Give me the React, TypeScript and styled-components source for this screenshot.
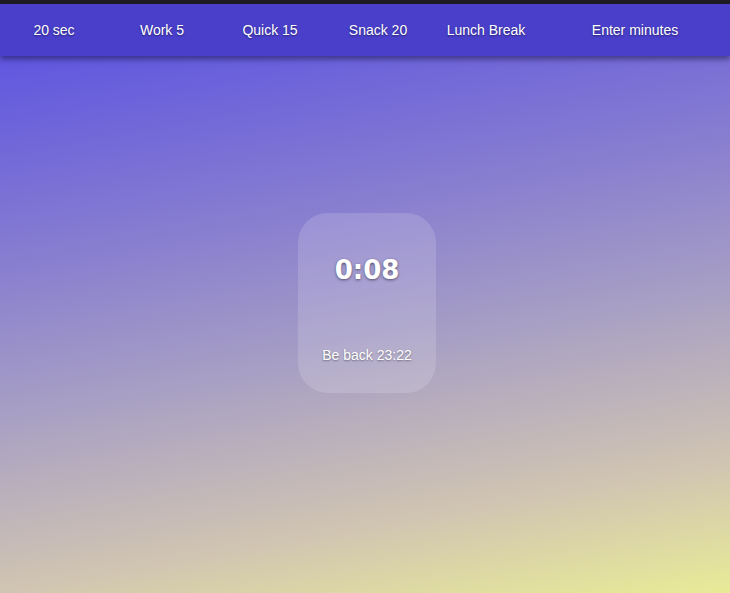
import React from "react";
import styled, { createGlobalStyle } from "styled-components";

const Global = createGlobalStyle`
  html, body { margin: 0; padding: 0; height: 100%; }
  body {
    font-family: "Liberation Sans", Arial, sans-serif;
    background: #1e1d24;
  }
  #root { height: 100%; }
`;

const Page = styled.div`
  min-height: 593px;
  box-sizing: border-box;
  padding-top: 4px;
  display: flex;
  flex-direction: column;
  background: #1e1d24;
`;

const Main = styled.div`
  flex: 1;
  display: flex;
  flex-direction: column;
  background: linear-gradient(
    170deg,
    #5f56e0 0%,
    #8a80cf 33%,
    #a79fc4 54%,
    #d0c4b2 80%,
    #e9eb97 100%
  );
`;

const NavBar = styled.nav`
  height: 52px;
  display: flex;
  align-items: stretch;
  background: #493fca;
  box-shadow: 0 3px 6px rgba(20, 15, 60, 0.55);
  position: relative;
  z-index: 1;
`;

const NavButton = styled.button`
  width: 108px;
  flex: none;
  border: 0;
  background: transparent;
  color: #fff;
  font-family: "Liberation Sans", Arial, sans-serif;
  font-size: 14px;
  text-shadow: 0 1px 2px rgba(0, 0, 0, 0.45);
  cursor: pointer;
  padding: 0;
`;

const MinutesInput = styled.input`
  flex: 1;
  min-width: 0;
  border: 0;
  background: transparent;
  color: #fff;
  text-align: center;
  font-family: "Liberation Sans", Arial, sans-serif;
  font-size: 14px;
  text-shadow: 0 1px 2px rgba(0, 0, 0, 0.45);
  outline: none;
  padding: 0;
  &::placeholder {
    color: #fff;
    opacity: 1;
  }
`;

const Stage = styled.div`
  display: flex;
  justify-content: center;
  padding-top: 157px;
  padding-left: 4px;
`;

const Card = styled.div`
  width: 138px;
  height: 180px;
  box-sizing: border-box;
  border-radius: 30px;
  background: rgba(255, 255, 255, 0.15);
  display: flex;
  flex-direction: column;
  align-items: center;
  padding-top: 42px;
`;

const Time = styled.div`
  font-family: "DejaVu Sans", sans-serif;
  font-weight: bold;
  font-size: 26px;
  line-height: 30px;
  color: #fff;
  text-shadow: 0 1px 3px rgba(0, 0, 0, 0.5);
`;

const BackAt = styled.div`
  margin-top: 62px;
  font-family: "Liberation Sans", Arial, sans-serif;
  font-size: 14px;
  line-height: 16px;
  color: #fff;
  text-shadow: 0 1px 2px rgba(0, 0, 0, 0.4);
`;

const presets = ["20 sec", "Work 5", "Quick 15", "Snack 20", "Lunch Break"];

export default function App() {
  return (
    <>
      <Global />
      <Page>
        <NavBar>
          {presets.map((p) => (
            <NavButton key={p}>{p}</NavButton>
          ))}
          <MinutesInput placeholder="Enter minutes" />
        </NavBar>
        <Main>
          <Stage>
            <Card>
              <Time>0:08</Time>
              <BackAt>Be back 23:22</BackAt>
            </Card>
          </Stage>
        </Main>
      </Page>
    </>
  );
}
